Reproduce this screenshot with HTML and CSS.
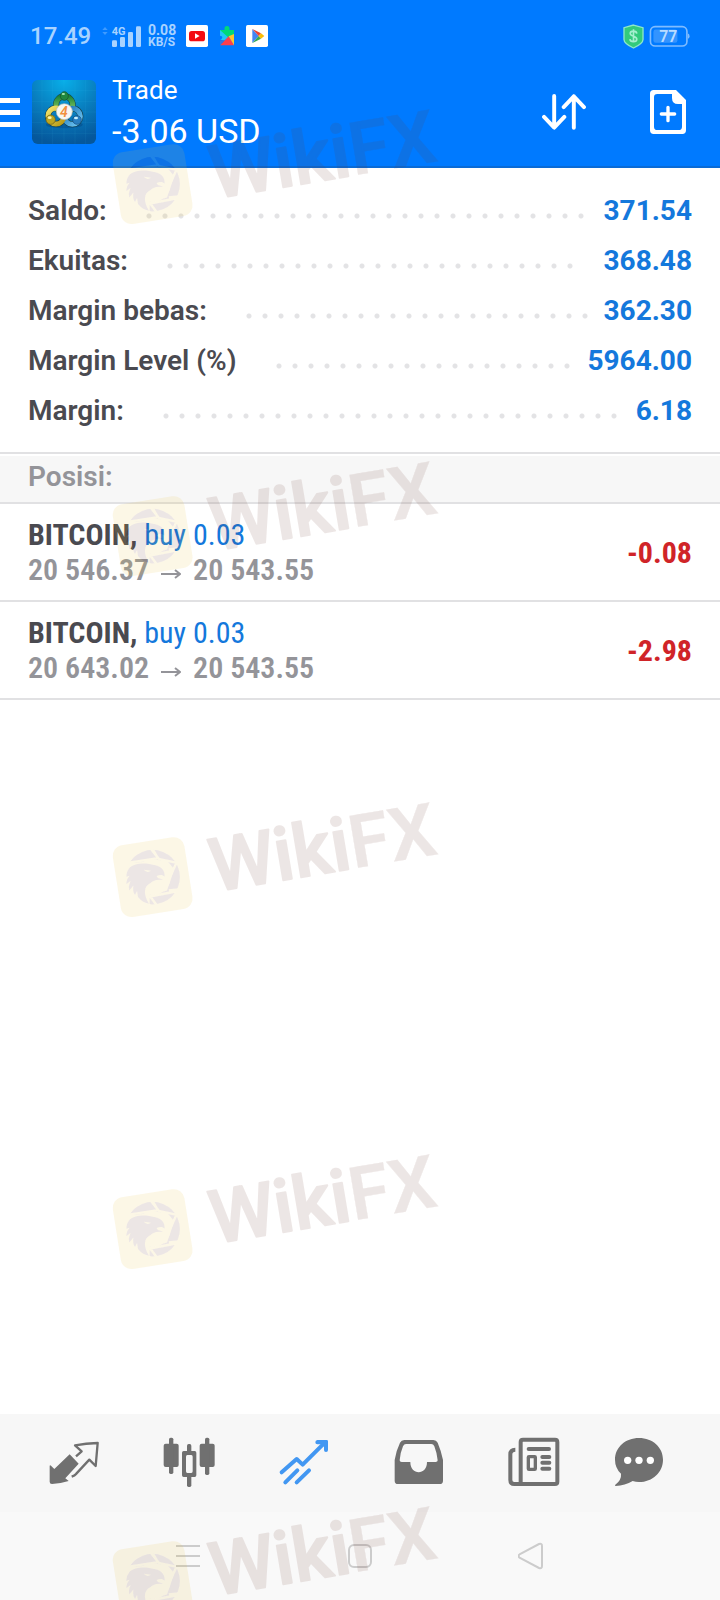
FILE: index.html
```html
<!DOCTYPE html>
<html lang="id">
<head>
<meta charset="utf-8">
<meta name="viewport" content="width=device-width, initial-scale=1">
<title>Trade</title>
<link rel="stylesheet" href="styles.css">
</head>
<body>
<div class="screen">
  <header class="top">
    <div class="status">
      <span class="clock">17.49</span>
      <svg class="signal" viewBox="303 70 120 72" width="40" height="24" aria-hidden="true">
        <path d="M307 88l8-9 8 9zM307 94l8 9 8-9z" fill="#3f9bff"/>
        <g fill="#a9d3ff"><rect x="336" y="119" width="15" height="20" rx="4"/><rect x="360" y="109" width="15" height="30" rx="4"/><rect x="384" y="94" width="15" height="45" rx="4"/><rect x="408" y="77" width="15" height="62" rx="4"/></g>
        <text x="335" y="102" font-size="33" font-weight="700" fill="#a9d3ff">4G</text>
      </svg>
      <span class="rate"><span>0.08</span><span>KB/S</span></span>
      <svg class="app-badge" viewBox="558 75 66 66" width="22" height="22" aria-hidden="true">
        <rect x="558" y="75" width="66" height="66" rx="5" fill="#fff"/><rect x="567" y="93" width="48" height="31" rx="8" fill="#f30b12"/><path d="M585 100v16l14-8z" fill="#fff"/>
      </svg>
      <svg class="app-badge" viewBox="648 75 66 66" width="22" height="22" aria-hidden="true">
        <path d="M660 90h14c-2-7 1-12 7-12s9 5 7 12h14v17l-17 4-25-6z" fill="#00d879"/>
        <path d="M660 90l26 23-14 9-12-4c9-1 9-11 0-11z" fill="#20c7f5"/>
        <path d="M660 136l26-27 16 27z" fill="#ff3d4d"/><path d="M660 136v-14l15-2z" fill="#3973dc"/><path d="M686 109l16-7v34z" fill="#ffc52c"/>
      </svg>
      <svg class="app-badge" viewBox="738 75 66 66" width="22" height="22" aria-hidden="true">
        <rect x="738" y="75" width="66" height="66" rx="5" fill="#fff"/>
        <path d="M757 87v42l19-21z" fill="#4285f4"/><path d="M757 87l26 13-7 8z" fill="#ea4335"/><path d="M757 129l26-13-7-8z" fill="#34a853"/><path d="M783 100l10 8-10 8-7-8z" fill="#fbbc04"/>
      </svg>
      <svg class="shield" viewBox="370 70 64 76" width="21" height="25" aria-hidden="true">
        <path d="M402 73l29 8v36c0 10-16 20-29 26-13-6-29-16-29-26V81z" fill="#33ca7c" stroke="#8ee8c8" stroke-width="4"/>
        <path d="M412 99c-1-10-20-10-20 0s20 7 20 17-20 10-21 0M402 86v40" fill="none" stroke="#a5efcf" stroke-width="5"/>
      </svg>
      <svg class="battery" viewBox="448 72 124 70" width="41" height="23" aria-hidden="true">
        <rect x="452" y="77" width="111" height="59" rx="14" fill="none" stroke="#7fbcff" stroke-width="5"/>
        <path d="M566 98q5 1 5 8t-5 8z" fill="#7fbcff"/><rect x="461" y="86" width="73" height="40" rx="7" fill="#3394ff"/>
        <text x="479" y="123" font-size="48" font-weight="600" fill="#b9dcff">77</text>
      </svg>
    </div>
    <div class="appbar">
      <button class="icon-button menu" aria-label="Menu">
        <svg viewBox="0 0 20 30" width="20" height="30"><path d="M0 3.500h20M0 15.500h20M0 27.500h20" stroke="#fff" stroke-width="5"/></svg>
      </button>
      <svg class="app-logo" viewBox="0 0 192 192" width="64" height="64" role="img" aria-label="MetaTrader 4">
        <defs>
          <radialGradient id="sky" cx=".5" cy="0" r="1"><stop offset="0" stop-color="#08afe9"/><stop offset=".55" stop-color="#087cbd"/><stop offset="1" stop-color="#05579b"/></radialGradient>
          <linearGradient id="green" x2="0" y2="1"><stop stop-color="#1c8539"/><stop offset="1" stop-color="#9ed76a"/></linearGradient>
          <linearGradient id="gold" x2="1" y2="1"><stop stop-color="#f5e56c"/><stop offset="1" stop-color="#b49612"/></linearGradient>
          <linearGradient id="blue" x2="1" y2="1"><stop stop-color="#176fb5"/><stop offset="1" stop-color="#72caf5"/></linearGradient>
        </defs>
        <rect width="192" height="192" rx="17" fill="url(#sky)"/>
        <path d="M30 0v192M62 0v192M96 0v192M129 0v192M161 0v192M0 32h192M0 64h192M0 96h192M0 128h192M0 160h192" stroke="#5fc8ee" stroke-opacity=".24" stroke-width="1"/>
        <ellipse cx="97" cy="134" rx="55" ry="11" fill="#023a75" opacity=".35"/>
        <g fill="none" stroke="#14404a" stroke-width="18"><circle cx="97" cy="74" r="25"/><circle cx="72" cy="108" r="24"/><circle cx="121" cy="109" r="24"/></g>
        <circle cx="97" cy="74" r="25" fill="none" stroke="url(#green)" stroke-width="15"/>
        <circle cx="121" cy="109" r="24" fill="none" stroke="url(#blue)" stroke-width="15"/>
        <circle cx="72" cy="108" r="24" fill="none" stroke="url(#gold)" stroke-width="15"/>
        <ellipse cx="97" cy="48" rx="12" ry="13" fill="#20883e" stroke="#16502d" stroke-width="2"/><ellipse cx="94" cy="42" rx="5" ry="3" fill="#a5e8b0"/>
        <circle cx="56" cy="119" r="14" fill="#bda520" stroke="#6b5b13" stroke-width="2"/><ellipse cx="53" cy="113" rx="6" ry="4" fill="#fff4a6"/>
        <circle cx="135" cy="120" r="13" fill="#297fc1" stroke="#134a7d" stroke-width="2"/><ellipse cx="132" cy="114" rx="6" ry="4" fill="#c8efff"/>
        <circle cx="97" cy="95" r="24" fill="#f7f7f2" stroke="#b6b8b4" stroke-width="2"/>
        <text x="96" y="110" text-anchor="middle" font-size="42" font-weight="600" font-style="italic" fill="#f19040">4</text>
      </svg>
      <div class="heading"><h1 class="title">Trade</h1><p class="profit">-3.06 USD</p></div>
      <button class="icon-button sort" aria-label="Urutkan">
        <svg viewBox="125 281 134 110" width="44" height="36"><path d="M162 287v96M131 351l31 33 31-33M222 384v-96M191 321l31-33 31 33" fill="none" stroke="#fff" stroke-width="12" stroke-linecap="round" stroke-linejoin="round"/></svg>
      </button>
      <button class="icon-button order" aria-label="Order baru">
        <svg viewBox="450 270 108 132" width="36" height="44"><path fill="#fff" fill-rule="evenodd" d="M461 270h67l30 30v91q0 11-11 11h-86q-11 0-11-11V281q0-11 11-11zm11 12q-10 0-10 10v88q0 10 10 10h64q10 0 10-10v-68h-12q-18 0-18-18v-12z"/><path d="M504 322v40M484 342h40" stroke="#fff" stroke-width="10" stroke-linecap="round"/></svg>
      </button>
    </div>
  </header>

  <main class="content">
    <dl class="summary">
      <div class="row"><dt>Saldo:</dt><dd><span class="leader"></span>371.54</dd></div>
      <div class="row"><dt>Ekuitas:</dt><dd><span class="leader leader-short"></span>368.48</dd></div>
      <div class="row"><dt>Margin bebas:</dt><dd><span class="leader"></span>362.30</dd></div>
      <div class="row"><dt>Margin Level (%)</dt><dd><span class="leader"></span>5964.00</dd></div>
      <div class="row"><dt>Margin:</dt><dd><span class="leader"></span>6.18</dd></div>
    </dl>
    <h2 class="section">Posisi:</h2>
    <ul class="positions">
      <li class="position">
        <div><p class="deal"><b>BITCOIN,</b> <span class="side">buy 0.03</span></p><p class="prices">20 546.37 <svg class="arrow" viewBox="0 0 20 12" width="20" height="12" role="img" aria-label="ke"><path d="M0 6h18M14 2l5 4-5 4" fill="none" stroke="#949499" stroke-width="2"/></svg> 20 543.55</p></div>
        <strong class="result">-0.08</strong>
      </li>
      <li class="position">
        <div><p class="deal"><b>BITCOIN,</b> <span class="side">buy 0.03</span></p><p class="prices">20 643.02 <svg class="arrow" viewBox="0 0 20 12" width="20" height="12" role="img" aria-label="ke"><path d="M0 6h18M14 2l5 4-5 4" fill="none" stroke="#949499" stroke-width="2"/></svg> 20 543.55</p></div>
        <strong class="result">-2.98</strong>
      </li>
    </ul>
  </main>

  <nav class="tabs" aria-label="Menu utama">
    <button class="tab" aria-label="Kuotasi"><svg viewBox="142 108 156 156" width="52" height="52"><path d="M207 163l27 28-40 44 10 8q-25 8-50 9-7 0-7-7v-46q0-5 4-2l10 10z" fill="#707070"/><path d="M213 230q9-3 14-9l39-42 19 19 6-69q-35 1-68 7l20 18-17 15" fill="none" stroke="#707070" stroke-width="7" stroke-linejoin="round"/></svg></button>
    <button class="tab" aria-label="Grafik"><svg viewBox="487 108 156 156" width="52" height="52"><g fill="#707070"><rect x="489" y="131" width="45" height="70" rx="6"/><rect x="505" y="113" width="13" height="109" rx="5"/><rect x="597" y="131" width="45" height="70" rx="6"/><rect x="613" y="113" width="13" height="112" rx="5"/><rect x="559" y="132" width="13" height="26" rx="5"/><rect x="559" y="226" width="13" height="35" rx="5"/><path fill-rule="evenodd" d="M549 153h33q5 0 5 5v68q0 5-5 5h-33q-5 0-5-5v-68q0-5 5-5zm11 12q-4 0-4 5v44q0 5 4 5h12q4 0 4-5v-44q0-5-4-5z"/></g></svg></button>
    <button class="tab" aria-label="Trade" aria-current="page"><svg viewBox="831 108 156 156" width="52" height="52"><path d="M842 217l45-40 18 17 64-64M853 247l36-36M887 247l37-36" fill="none" stroke="#4297f2" stroke-width="12" stroke-linecap="round" stroke-linejoin="round"/><path d="M949 120h28q4 0 4 4v26q0 6-6 6t-6-6v-10l-9-7h-11q-6 0-6-6t6-7z" fill="#4297f2"/></svg></button>
    <button class="tab" aria-label="Riwayat"><svg viewBox="98 108 156 156" width="52" height="52"><path fill="#707070" fill-rule="evenodd" d="M132 120h87q9 0 13 8 10 23 16 52v62q0 10-10 10H113q-10 0-10-10v-62q5-30 16-52 4-8 13-8zm5 12q-6 0-9 7-8 18-10 42 0 5 6 5h26c0 41 50 41 50 0h26q6 0 6-5-3-25-10-42-3-7-9-7z"/></svg></button>
    <button class="tab" aria-label="Berita"><svg viewBox="443 108 156 156" width="52" height="52"><path d="M465 149q-15 0-15 14v77q0 12 12 12h122q7 0 7-7V126q0-7-7-7h-96q-7 0-7 7v122" fill="none" stroke="#707070" stroke-width="12"/><path d="M505 147h61M546 171h21M546 188h21M546 206h21" stroke="#707070" stroke-width="12" stroke-linecap="round"/><rect x="504" y="170" width="21" height="38" rx="2" fill="none" stroke="#707070" stroke-width="10"/></svg></button>
    <button class="tab" aria-label="Pesan"><svg viewBox="759 108 156 156" width="52" height="52"><path d="M837 114c41 0 72 28 72 65s-31 67-72 67q-10 0-19-3-23 14-51 15-4-1-1-4 19-14 17-33-18-17-18-42c0-37 31-65 72-65z" fill="#707070"/><g fill="#fff"><circle cx="803" cy="181" r="11"/><circle cx="837" cy="181" r="11"/><circle cx="871" cy="181" r="11"/></g></svg></button>
  </nav>

  <nav class="system" aria-label="Navigasi sistem">
    <button class="key" aria-label="Aplikasi terbaru"><svg viewBox="0 0 28 28" width="28" height="28"><path d="M2 4h24M2 14h24M2 24h24" stroke="#ccc" stroke-width="2"/></svg></button>
    <button class="key" aria-label="Beranda"><svg viewBox="0 0 28 28" width="28" height="28"><rect x="3" y="3" width="22" height="22" rx="5" fill="none" stroke="#ccc" stroke-width="2"/></svg></button>
    <button class="key" aria-label="Kembali"><svg viewBox="0 0 28 28" width="28" height="28"><path d="M21 2q3-1 3 2v20q0 3-3 2L2 16q-3-2 0-4z" fill="none" stroke="#ccc" stroke-width="2"/></svg></button>
  </nav>

  <svg class="mark mark-1" viewBox="0 0 1050 400" width="350" height="133" aria-hidden="true">
    <defs>
    <mask id="cut" maskUnits="userSpaceOnUse" x="60" y="160" width="200" height="200">
      <circle cx="157" cy="262" r="82" fill="#fff"/>
      <circle cx="157" cy="262" r="54" fill="#000"/>
      <path d="M76 220l98-15-23-29M172 204l-14-25M174 207l60 13M230 216l-40 88M206 302l40-4M238 303l-94 18M148 318l23 31" fill="none" stroke="#000" stroke-width="7"/>
      <path d="M70 222l128-12 24 28-22 64-52 12v40l-90-30z" fill="#000"/>
    </mask>
    <g id="eagle">
      <rect x="60" y="160" width="200" height="200" mask="url(#cut)"/>
      <path d="M88 233c16-14 46-14 70-8 21 2 37 15 35 36-7-8-16-5-24-2 3 9 14 7 19 12-17-3-31 1-37 9-22 10-22 35-5 62-15-3-26-10-33-20l-3-18-6 12q-8-11-5-29l-12 15q-4-14 4-28l-13 9q0-16 10-25l-10 3q-1-14 10-28zm42 7q11 11 22 3z" fill-rule="evenodd"/>
    </g>
    <mask id="plate" maskUnits="userSpaceOnUse" x="0" y="100" width="320" height="300">
      <rect y="100" width="320" height="300" fill="#fff"/>
      <use href="#eagle" fill="#000"/>
    </mask>
    <g id="brand">
      <g mask="url(#plate)"><rect x="48" y="153" width="218" height="218" rx="32" transform="rotate(-9 157 262)" fill="#eac43c" fill-opacity=".13"/></g>
      <use href="#eagle" fill="#6e3a30" opacity=".12"/>
      <g transform="translate(342 306) rotate(-9.500)" font-family="Roboto, sans-serif" font-size="222" fill="#6e3a30" opacity=".12">
        <text font-weight="500" stroke="#6e3a30" stroke-width="6" stroke-linejoin="round">Wiki<tspan font-weight="600" stroke-width="1" stroke-linejoin="miter">FX</tspan></text>
      </g>
    </g>
    </defs>
    <use href="#brand"/>
  </svg>
  <svg class="mark mark-2" viewBox="0 0 1050 400" width="350" height="133" aria-hidden="true"><use href="#brand"/></svg>
  <svg class="mark mark-3" viewBox="0 0 1050 400" width="350" height="133" aria-hidden="true"><use href="#brand"/></svg>
  <svg class="mark mark-4" viewBox="0 0 1050 400" width="350" height="133" aria-hidden="true"><use href="#brand"/></svg>
  <svg class="mark mark-5" viewBox="0 0 1050 400" width="350" height="133" aria-hidden="true"><use href="#brand"/></svg>
</div>
</body>
</html>
```
FILE: styles.css
```css
* { box-sizing: border-box; }

body {
  margin: 0;
  background: #fff;
  font-family: Roboto, sans-serif;
  color: #4a4a50;
}

h1, h2, p, dl, dd, ul { margin: 0; padding: 0; }
ul { list-style: none; }
svg { display: block; flex: none; }

button {
  margin: 0;
  padding: 0;
  border: 0;
  background: none;
  display: flex;
  align-items: center;
  justify-content: center;
}

.screen {
  position: relative;
  overflow: hidden;
  min-height: 100vh;
  display: flex;
  flex-direction: column;
}

/* Header */
.top {
  background: #007aff;
  border-bottom: 2px solid #0a6bd6;
}

.status {
  height: 72px;
  padding: 0 30px;
  display: flex;
  align-items: center;
  color: #a9d3ff;
}

.clock { font-size: 24px; font-weight: 500; width: 71px; }

.rate {
  margin: 0 10px 0 7px;
  display: flex;
  flex-direction: column;
  width: 28px;
  font-size: 12px;
  line-height: 12px;
  font-weight: 700;
}
.rate span:first-child { font-size: 14px; }

.app-badge { margin-right: 8px; }
.shield { margin-left: auto; margin-right: 5px; }

.appbar {
  height: 94px;
  padding: 0 34px 0 0;
  display: flex;
  align-items: flex-start;
}

.icon-button { height: 80px; }
.menu { margin-right: 12px; }
.app-logo { margin: 8px 16px 0 0; }
.heading { flex: 1; font-weight: 400; color: #fff; }
.title { font-size: 26px; line-height: 36px; font-weight: 400; }
.profit { font-size: 34px; line-height: 46px; }
.sort { margin-right: 64px; }

/* Account summary */
.content { flex: 1; }

.summary { padding: 18px 28px 16px; }

.row {
  height: 50px;
  display: flex;
  align-items: center;
  font-size: 28px;
  line-height: 50px;
  font-weight: 600;
}

.row dd {
  flex: 1;
  display: flex;
  align-items: center;
  color: #1478dc;
  font-weight: 700;
}

.leader {
  flex: 1;
  height: 6px;
  margin: 10px 16px 0 39px;
  background: radial-gradient(circle at 3px 3px, #e3e3e5 2px, transparent 3px) 0 0 / 16px 6px repeat-x;
}
.leader-short { margin-right: 26px; }

/* Positions */
.section {
  height: 52px;
  border: solid #e1e1e3;
  border-width: 2px 0;
  background: #f7f7f7;
  box-shadow: inset 0 2px #fff;
  padding: 0 28px;
  font-size: 28px;
  line-height: 46px;
  font-weight: 600;
  color: #949499;
}

.position {
  padding: 13px 28px;
  border-bottom: 2px solid #e1e1e3;
  display: flex;
  align-items: center;
  justify-content: space-between;
  font-family: "Roboto Condensed", Roboto, sans-serif;
  font-size: 30px;
  line-height: 35px;
}

.deal b { font-weight: 700; }
.side { color: #1478dc; }
.prices { display: flex; gap: 12px; align-items: center; font-weight: 600; color: #949499; }
.arrow { margin-top: 8px; }
.result { color: #d02428; font-weight: 700; }

/* Bottom bars */
.tabs {
  height: 98px;
  padding: 22px 33px 0 16px;
  background: #f7f7f7;
  display: grid;
  grid-template-columns: repeat(5, 115fr) 96fr;
  align-items: start;
}

.system {
  height: 88px;
  padding: 0 102px;
  background: #f9f9f9;
  display: grid;
  grid-template-columns: repeat(3, 1fr);
}

/* Brand marks lying over the whole screen */
.mark { position: absolute; left: 100px; pointer-events: none; }
.mark-1 { top: 97px; }
.mark-2 { top: 449px; }
.mark-3 { top: 790px; }
.mark-4 { top: 1142px; }
.mark-5 { top: 1494px; }
```
